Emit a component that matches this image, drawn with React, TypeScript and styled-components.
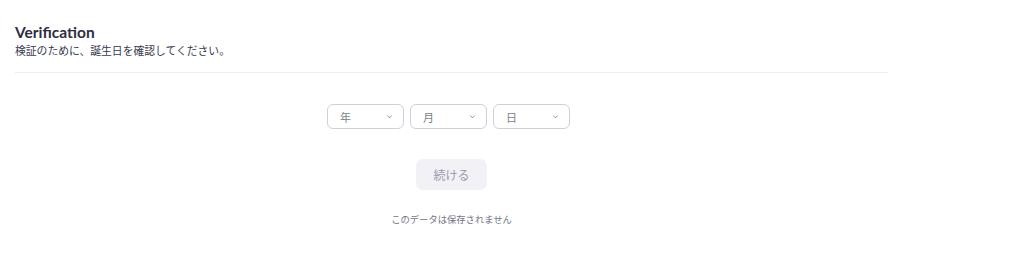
import React from "react";
import styled, { createGlobalStyle } from "styled-components";

const GlobalStyle = createGlobalStyle`
  body {
    margin: 0;
    background: #ffffff;
    font-family: Lato, "Noto Sans CJK JP", sans-serif;
    color: #232333;
  }
`;

const Page = styled.div`
  width: 873px;
  padding: 21px 0 0 15px;
`;

const Header = styled.div`
  padding-bottom: 13px;
  border-bottom: 1px solid #ededf0;
`;

const Title = styled.h1`
  margin: 0;
  font-size: 15.5px;
  line-height: 22px;
  font-weight: 700;
  color: #2d2d3d;
`;

const Subtitle = styled.p`
  margin: 0;
  font-size: 10.8px;
  line-height: 16px;
  color: #39394d;
`;

const Body = styled.div`
  display: flex;
  flex-direction: column;
  align-items: center;
  padding-top: 31px;
`;

const SelectRow = styled.div`
  display: flex;
  gap: 6px;
  padding-right: 6px;
`;

const Select = styled.div`
  box-sizing: border-box;
  width: 77px;
  height: 25px;
  display: flex;
  align-items: center;
  justify-content: space-between;
  padding: 0 10px 0 12px;
  border: 1px solid #cfd0da;
  border-radius: 6px;
  font-size: 11px;
  color: #7a7f88;
  cursor: pointer;
`;

const Chevron = styled.svg`
  width: 7px;
  height: 7px;
`;

const ContinueButton = styled.button`
  margin-top: 30px;
  width: 71px;
  height: 31px;
  border: none;
  border-radius: 7px;
  background: #f1f1f6;
  color: #9b9bae;
  font-family: Lato, "Noto Sans CJK JP", sans-serif;
  font-size: 12px;
`;

const Note = styled.p`
  margin: 23px 0 0;
  font-size: 9.3px;
  line-height: 14px;
  color: #747487;
`;

const fields = ["年", "月", "日"];

export default function App() {
  return (
    <>
      <GlobalStyle />
      <Page>
        <Header>
          <Title>Verification</Title>
          <Subtitle>検証のために、誕生日を確認してください。</Subtitle>
        </Header>
        <Body>
          <SelectRow>
            {fields.map((f) => (
              <Select key={f}>
                <span>{f}</span>
                <Chevron viewBox="0 0 8 8">
                  <path d="M1.5 3l2.5 2.5L6.5 3" fill="none" stroke="#7a7a8c" strokeWidth="1" />
                </Chevron>
              </Select>
            ))}
          </SelectRow>
          <ContinueButton>続ける</ContinueButton>
          <Note>このデータは保存されません</Note>
        </Body>
      </Page>
    </>
  );
}
